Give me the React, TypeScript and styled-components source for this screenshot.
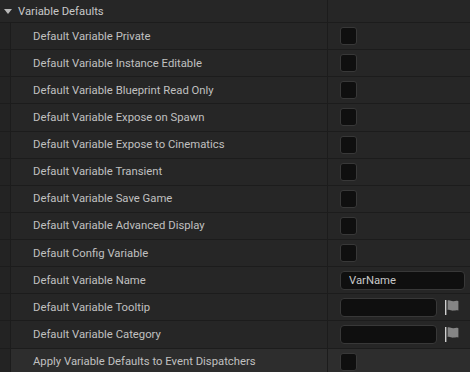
import React, { useState } from "react";
import styled, { createGlobalStyle } from "styled-components";

const GlobalStyle = createGlobalStyle`
  html, body {
    margin: 0;
    padding: 0;
    background: #1c1c1c;
  }
  body {
    font-family: Roboto, "Noto Sans", sans-serif;
    font-size: 11.3px;
    color: #c0c0c0;
  }
`;

const Panel = styled.div`
  width: 470px;
  height: 372px;
  overflow: hidden;
  background: #1c1c1c;
  display: flex;
  flex-direction: column;
  gap: 1px;
`;

const Header = styled.div`
  display: grid;
  grid-template-columns: 327px 1px 1fr;
  height: 22px;
  flex-shrink: 0;
  background: #262626;
`;

const HeaderTitle = styled.div`
  display: flex;
  align-items: center;
  gap: 6px;
  padding-left: 4px;
  color: #c8c8c8;
`;

const Caret = styled.span`
  width: 0;
  height: 0;
  border-left: 4px solid transparent;
  border-right: 4px solid transparent;
  border-top: 5px solid #b8b8b8;
  margin-top: 1px;
`;

const Divider = styled.div`
  background: #1c1c1c;
`;

const Row = styled.div<{ $hover?: boolean }>`
  display: grid;
  grid-template-columns: 10px 1px 316px 1px 1fr;
  height: 26.13px;
  flex-shrink: 0;
  background: ${(p) => (p.$hover ? "#2d2d2d" : "#262626")};
`;

const Gutter = styled.div`
  background: #232323;
`;

const Label = styled.div`
  display: flex;
  align-items: center;
  padding-left: 22px;
  white-space: nowrap;
  color: #c0c0c0;
`;

const Value = styled.div`
  display: flex;
  align-items: center;
  padding-left: 12px;
  gap: 8px;
`;

const Check = styled.button<{ $on: boolean }>`
  width: 17px;
  height: 18px;
  padding: 0;
  border: 1px solid #383838;
  border-radius: 3px;
  background: #0f0f0f;
  cursor: pointer;
  color: #c0c0c0;
  font-size: 11px;
  line-height: 1;
`;

const TextBox = styled.input<{ $wide?: boolean }>`
  box-sizing: border-box;
  width: ${(p) => (p.$wide ? "125px" : "97px")};
  height: 19px;
  background: #0f0f0f;
  border: 1px solid #383838;
  border-radius: 4px;
  padding: 0 8px;
  color: #c8c8c8;
  font-family: Roboto, "Noto Sans", sans-serif;
  font-size: 11.3px;
  outline: none;
`;

const Flag = () => (
  <svg width="14" height="16" viewBox="0 0 14 16">
    <rect x="0" y="1" width="1.4" height="15" fill="#d0d0d0" />
    <path
      d="M2.6 1.6 C4.6 0.6 6.6 2.6 8.6 2.2 C10.3 1.9 11.5 1.4 13.4 2.2 L13.4 11.6 C11.5 10.8 10.3 11.3 8.6 11.6 C6.6 12 4.6 10 2.6 11 Z"
      fill="#858585"
    />
  </svg>
);

type Field =
  | { label: string; kind: "check" }
  | { label: string; kind: "text"; value: string }
  | { label: string; kind: "flag" };

const fields: Field[] = [
  { label: "Default Variable Private", kind: "check" },
  { label: "Default Variable Instance Editable", kind: "check" },
  { label: "Default Variable Blueprint Read Only", kind: "check" },
  { label: "Default Variable Expose on Spawn", kind: "check" },
  { label: "Default Variable Expose to Cinematics", kind: "check" },
  { label: "Default Variable Transient", kind: "check" },
  { label: "Default Variable Save Game", kind: "check" },
  { label: "Default Variable Advanced Display", kind: "check" },
  { label: "Default Config Variable", kind: "check" },
  { label: "Default Variable Name", kind: "text", value: "VarName" },
  { label: "Default Variable Tooltip", kind: "flag" },
  { label: "Default Variable Category", kind: "flag" },
  { label: "Apply Variable Defaults to Event Dispatchers", kind: "check" },
];

export default function App() {
  const [checked, setChecked] = useState<boolean[]>(fields.map(() => false));

  const toggle = (i: number) => {
    const next = [...checked];
    next[i] = !next[i];
    setChecked(next);
  };

  return (
    <>
      <GlobalStyle />
      <Panel>
        <Header>
          <HeaderTitle>
            <Caret />
            Variable Defaults
          </HeaderTitle>
          <Divider />
          <div />
        </Header>
        {fields.map((f, i) => (
          <Row key={f.label} $hover={i === fields.length - 1}>
            <Gutter />
            <Divider />
            <Label>{f.label}</Label>
            <Divider />
            <Value>
              {f.kind === "check" && (
                <Check $on={checked[i]} onClick={() => toggle(i)}>
                  {checked[i] ? "✓" : ""}
                </Check>
              )}
              {f.kind === "text" && <TextBox $wide defaultValue={f.value} />}
              {f.kind === "flag" && (
                <>
                  <TextBox />
                  <Flag />
                </>
              )}
            </Value>
          </Row>
        ))}
      </Panel>
    </>
  );
}
